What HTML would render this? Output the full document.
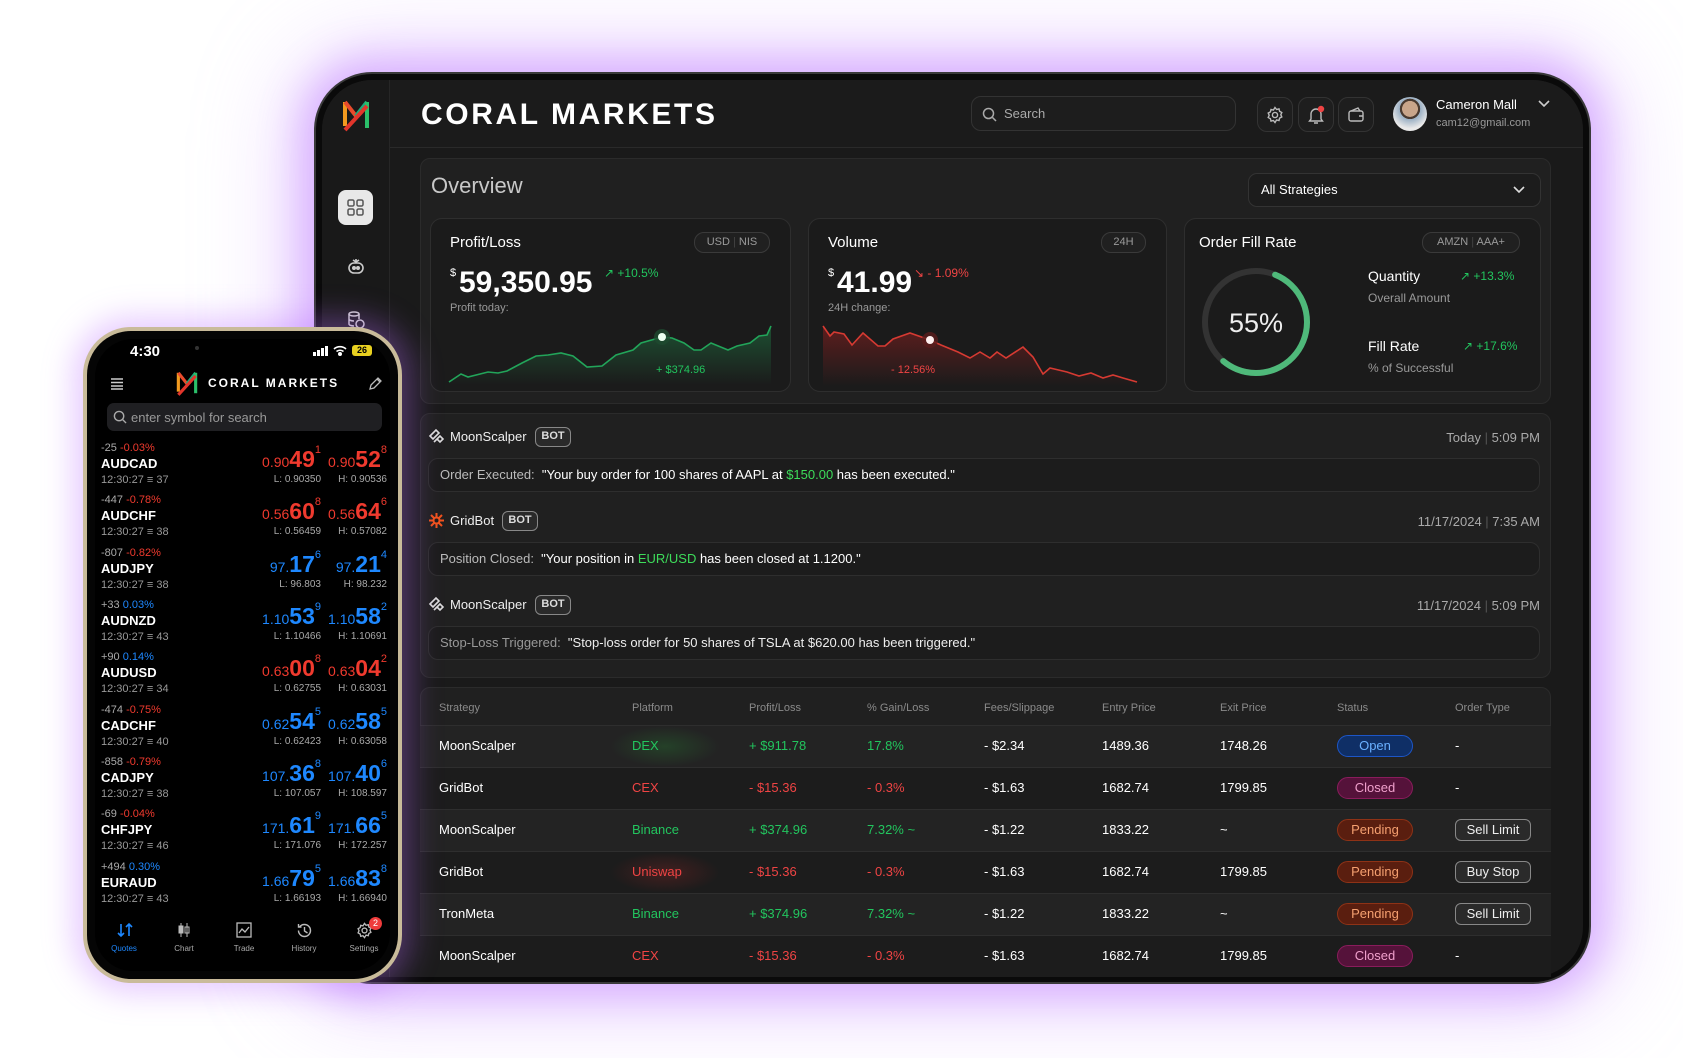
<!DOCTYPE html>
<html><head><meta charset="utf-8">
<style>
*{margin:0;padding:0;box-sizing:border-box}
body{width:1683px;height:1058px;background:#fff;position:relative;overflow:hidden;font-family:"Liberation Sans",sans-serif;color:#fff}
.a{position:absolute}
.tab{left:314px;top:72px;width:1277px;height:912px;border-radius:58px;background:#0a0a0a;border:2px solid #3a3a3a;box-shadow:0 0 40px 14px rgba(185,110,255,.45),0 0 90px 30px rgba(210,160,255,.35)}
.scr{left:322px;top:80px;width:1261px;height:897px;border-radius:50px;background:#1a1a1a;overflow:hidden}
.side{left:0;top:0;width:68px;height:100%;background:#191919;border-right:1px solid #262626}
.hdr{left:68px;top:0;right:0;height:68px;border-bottom:1px solid #2a2a2a;background:#1b1b1b}
.panel{background:#202020;border:1px solid #2b2b2b;border-radius:10px}
.card{background:#1b1b1b;border:1px solid #2e2e2e;border-radius:12px}
.pill{border:1px solid #3a3a3a;border-radius:10px;color:#9a9a9a;font-size:11px;text-align:center;background:#202020}
.ib{width:36px;height:35px;border:1px solid #333;border-radius:10px;background:#1e1e1e}
.g{color:#22c55e}.r{color:#ef4444}
.msg{left:428px;width:1112px;height:34px;border:1px solid #2e2e2e;border-radius:10px;background:#1c1c1c;font-size:13px;padding-left:11px;line-height:32px;color:#fff}
.bot{border:1.5px solid #888;border-radius:6px;font-size:11px;font-weight:bold;color:#ddd;width:36px;height:20px;line-height:17px;text-align:center;background:#2a2a2a}
.mh{font-size:13px;color:#eee}
.dt{font-size:13px;color:#aaa;text-align:right;left:1240px;width:300px}
.th{font-size:11px;color:#8a8a8a;top:702px}
.tr{left:420px;width:1131px;height:42px;border-top:1px solid #2e2e2e}
.td{font-size:13px;line-height:42px}
.st{width:76px;height:22px;border-radius:11px;font-size:13px;text-align:center;line-height:19px;border:1.5px solid}
.ot{width:76px;height:22px;border-radius:6px;font-size:13px;text-align:center;line-height:19px;border:1.5px solid #888;background:#2a2a2a;color:#eee}
.phone{left:83px;top:327px;width:319px;height:656px;border-radius:48px;background:#c9bb9a;box-shadow:0 0 30px 10px rgba(185,110,255,.35)}
.pin{left:87px;top:331px;width:311px;height:648px;border-radius:44px;background:#050505}
.row{left:101px;width:290px;height:52px}
.chg{font-size:11px;color:#aaa;top:2px;left:0}
.sym{font-size:13px;font-weight:bold;top:16px;left:0;color:#fff}
.tm{font-size:11px;color:#999;top:34px;left:0}
.pr{top:6px;text-align:right;font-size:14px;white-space:nowrap}
.pr b{font-size:23px;font-weight:bold}
.pr sup{font-size:11px;position:relative;top:-2px;vertical-align:top}
.lh{top:34px;font-size:10px;color:#aaa;text-align:right}
.B{color:#1e88ff}.R{color:#f03a2e}
</style></head><body>

<div class="a tab"></div>
<div class="a scr">
 <div class="a side">
  <svg class="a" style="left:20px;top:16px" width="28" height="38" viewBox="0 0 28 38"><path d="M3 6 L3 30" stroke="#f29a1f" stroke-width="4"/><path d="M3 6 L14 20" stroke="#e94b2c" stroke-width="4"/><path d="M14 20 L25 6" stroke="#1faa7a" stroke-width="4"/><path d="M25 6 L25 32" stroke="#2bbf6a" stroke-width="4"/><path d="M3 34 L25 10" stroke="#e2352b" stroke-width="4"/></svg>
  <div class="a" style="left:16px;top:110px;width:35px;height:35px;border-radius:8px;background:#e8e8e8"></div>
  <svg class="a" style="left:25px;top:119px" width="17" height="17" viewBox="0 0 17 17" fill="none" stroke="#555" stroke-width="1.5"><rect x="1" y="1" width="6" height="6" rx="1.5"/><rect x="10" y="1" width="6" height="6" rx="1.5"/><rect x="1" y="10" width="6" height="6" rx="1.5"/><rect x="10" y="10" width="6" height="6" rx="1.5"/></svg>
  <svg class="a" style="left:24px;top:176px" width="20" height="20" viewBox="0 0 20 20" fill="none" stroke="#ccc" stroke-width="1.6"><rect x="3" y="7" width="14" height="10" rx="5"/><circle cx="8" cy="12" r="1.2" fill="#ccc"/><circle cx="12" cy="12" r="1.2" fill="#ccc"/><path d="M10 7V3M7 4l3 2 3-2"/></svg>
  <svg class="a" style="left:24px;top:230px" width="20" height="20" viewBox="0 0 20 20" fill="none" stroke="#ccc" stroke-width="1.5"><ellipse cx="8" cy="4" rx="5" ry="2"/><path d="M3 4v10c0 1 2 2 5 2M13 4v5M3 9c0 1 2 2 5 2"/><circle cx="14" cy="14" r="4"/></svg>
 </div>
 <div class="a hdr">
  <div class="a" style="left:31px;top:18px;font-size:30px;font-weight:bold;letter-spacing:2.6px">CORAL MARKETS</div>
  <div class="a" style="left:581px;top:16px;width:265px;height:35px;border:1px solid #333;border-radius:10px;background:#1d1d1d"></div>
  <svg class="a" style="left:592px;top:27px" width="15" height="15" viewBox="0 0 15 15" fill="none" stroke="#aaa" stroke-width="1.5"><circle cx="6.5" cy="6.5" r="5"/><path d="M10.5 10.5l3.5 3.5"/></svg>
  <div class="a" style="left:614px;top:26px;font-size:13px;color:#aaa">Search</div>
  <div class="a ib" style="left:867px;top:17px"></div>
  <div class="a ib" style="left:908px;top:17px"></div>
  <div class="a ib" style="left:948px;top:17px"></div>
  <svg class="a" style="left:876px;top:26px" width="18" height="18" viewBox="0 0 18 18" fill="none" stroke="#bbb" stroke-width="1.4"><circle cx="9" cy="9" r="2.6"/><path d="M9 1.5l1.6 2 2.4-.6.6 2.4 2.2 1.2-1 2.2 1 2.2-2.2 1.2-.6 2.4-2.4-.6L9 16.5l-1.6-2-2.4.6-.6-2.4-2.2-1.2 1-2.2-1-2.2 2.2-1.2.6-2.4 2.4.6z"/></svg>
  <svg class="a" style="left:917px;top:25px" width="18" height="20" viewBox="0 0 18 20" fill="none" stroke="#bbb" stroke-width="1.4"><path d="M4 14V9a5 5 0 0110 0v5l1.5 2h-13zM7 18h4"/><circle cx="14" cy="4" r="3.2" fill="#ef4444" stroke="none"/></svg>
  <svg class="a" style="left:957px;top:27px" width="18" height="16" viewBox="0 0 18 16" fill="none" stroke="#bbb" stroke-width="1.4"><rect x="2" y="4" width="14" height="10" rx="2"/><path d="M4 4l7-3 2 3M12 9h4"/></svg>
  <div class="a" style="left:1003px;top:17px;width:34px;height:34px;border-radius:50%;background:radial-gradient(circle at 50% 35%,#c9a58a 0 28%,#4a3a30 29% 36%,#9bb0c4 37%,#e9e9e9 70%)"></div>
  <div class="a" style="left:1046px;top:17px;font-size:13px;color:#fff">Cameron Mall</div>
  <div class="a" style="left:1046px;top:37px;font-size:11px;color:#999">cam12@gmail.com</div>
  <svg class="a" style="left:1148px;top:20px" width="12" height="8" viewBox="0 0 12 8" fill="none" stroke="#ccc" stroke-width="1.6"><path d="M1 1l5 5 5-5"/></svg>
 </div>
</div>

<div class="a panel" style="left:420px;top:158px;width:1131px;height:246px"></div>
<div class="a" style="left:431px;top:173px;font-size:22px;color:#c8c8c8">Overview</div>
<div class="a" style="left:1248px;top:173px;width:293px;height:34px;border:1px solid #333;border-radius:9px;background:#1c1c1c"></div>
<div class="a" style="left:1261px;top:182px;font-size:13px">All Strategies</div>
<svg class="a" style="left:1513px;top:186px" width="12" height="8" viewBox="0 0 12 8" fill="none" stroke="#ddd" stroke-width="1.6"><path d="M1 1l5 5 5-5"/></svg>

<div class="a card" style="left:430px;top:218px;width:361px;height:174px"></div>
<div class="a card" style="left:808px;top:218px;width:359px;height:174px"></div>
<div class="a card" style="left:1184px;top:218px;width:357px;height:174px"></div>

<div class="a" style="left:450px;top:234px;font-size:15px">Profit/Loss</div>
<div class="a pill" style="left:694px;top:232px;width:76px;height:21px;line-height:19px">USD <span style="color:#444">|</span> NIS</div>
<div class="a" style="left:450px;top:267px;font-size:11px">$</div>
<div class="a" style="left:459px;top:266px;font-size:30px;font-weight:bold">59,350.95</div>
<div class="a g" style="left:604px;top:266px;font-size:12px">&#8599; +10.5%</div>
<div class="a" style="left:450px;top:302px;font-size:11px;color:#999">Profit today:</div>

<div class="a" style="left:828px;top:234px;font-size:15px">Volume</div>
<div class="a pill" style="left:1101px;top:232px;width:45px;height:21px;line-height:19px">24H</div>
<div class="a" style="left:828px;top:267px;font-size:11px">$</div>
<div class="a" style="left:837px;top:266px;font-size:30px;font-weight:bold">41.99</div>
<div class="a r" style="left:914px;top:266px;font-size:12px">&#8600; - 1.09%</div>
<div class="a" style="left:828px;top:302px;font-size:11px;color:#999">24H change:</div>

<svg class="a" style="left:0;top:0" width="1683" height="1058">
 <defs>
  <linearGradient id="gg" x1="0" y1="0" x2="0" y2="1"><stop offset="0" stop-color="#1f7a44" stop-opacity=".55"/><stop offset="1" stop-color="#1f7a44" stop-opacity="0"/></linearGradient>
  <linearGradient id="rg" x1="0" y1="0" x2="0" y2="1"><stop offset="0" stop-color="#8a1f1f" stop-opacity=".6"/><stop offset="1" stop-color="#8a1f1f" stop-opacity="0"/></linearGradient>
 </defs>
 <polygon fill="url(#gg)" points="449,382 461,374 468,377 488,372 498,373 507,371 522,363 536,356 548,355 561,353 573,356 587,367 602,366 616,355 633,350 641,343 662,337 672,338 684,343 694,350 701,350 711,343 728,350 737,346 750,343 759,336 767,335 771,326 771,385 449,385"/>
 <polyline fill="none" stroke="#22a55a" stroke-width="1.6" points="449,382 461,374 468,377 488,372 498,373 507,371 522,363 536,356 548,355 561,353 573,356 587,367 602,366 616,355 633,350 641,343 662,337 672,338 684,343 694,350 701,350 711,343 728,350 737,346 750,343 759,336 767,335 771,326"/>
 <circle cx="662" cy="337" r="8" fill="#1e4a30" opacity=".8"/><circle cx="662" cy="337" r="4" fill="#eafff0"/>
 <polygon fill="url(#rg)" points="823,326 830,336 834,332 844,334 852,345 863,333 878,346 885,346 893,339 910,333 930,340 941,345 958,352 970,358 980,352 990,358 997,352 1006,358 1023,347 1033,357 1043,374 1050,368 1067,372 1079,376 1091,373 1103,378 1113,375 1123,378 1137,382 1137,386 823,386"/>
 <polyline fill="none" stroke="#d63a32" stroke-width="1.6" points="823,326 830,336 834,332 844,334 852,345 863,333 878,346 885,346 893,339 910,333 930,340 941,345 958,352 970,358 980,352 990,358 997,352 1006,358 1023,347 1033,357 1043,374 1050,368 1067,372 1079,376 1091,373 1103,378 1113,375 1123,378 1137,382"/>
 <circle cx="930" cy="340" r="8" fill="#5a1d1d" opacity=".8"/><circle cx="930" cy="340" r="4" fill="#fff0f0"/>
 <circle cx="1256" cy="322" r="51" fill="none" stroke="#333" stroke-width="6"/>
 <circle cx="1256" cy="322" r="51" fill="none" stroke="#4fb97a" stroke-width="6" stroke-linecap="round" stroke-dasharray="176 320" transform="rotate(-68 1256 322)"/>
</svg>
<div class="a g" style="left:656px;top:364px;font-size:11px">+ $374.96</div>
<div class="a r" style="left:891px;top:364px;font-size:11px">- 12.56%</div>

<div class="a" style="left:1199px;top:234px;font-size:15px">Order Fill Rate</div>
<div class="a pill" style="left:1422px;top:232px;width:98px;height:21px;line-height:19px">AMZN <span style="color:#444">|</span> AAA+</div>
<div class="a" style="left:1204px;top:308px;width:104px;text-align:center;font-size:27px;color:#eee">55%</div>
<div class="a" style="left:1368px;top:268px;font-size:14px">Quantity</div>
<div class="a g" style="left:1460px;top:269px;font-size:12px">&#8599; +13.3%</div>
<div class="a" style="left:1368px;top:291px;font-size:12px;color:#999">Overall Amount</div>
<div class="a" style="left:1368px;top:338px;font-size:14px">Fill Rate</div>
<div class="a g" style="left:1463px;top:339px;font-size:12px">&#8599; +17.6%</div>
<div class="a" style="left:1368px;top:361px;font-size:12px;color:#999">% of Successful</div>

<div class="a panel" style="left:420px;top:413px;width:1131px;height:265px"></div>
<svg class="a" style="left:428px;top:428px" width="17" height="17" viewBox="0 0 17 17" fill="none" stroke="#ddd" stroke-width="1.6"><path d="M2 8l6-6 3 3-6 6zM6 14l6-6 3 3-3 3-3-3"/></svg>
<div class="a mh" style="left:450px;top:429px">MoonScalper</div>
<div class="a bot" style="left:535px;top:427px">BOT</div>
<div class="a dt" style="top:430px">Today <span style="color:#555">|</span> 5:09 PM</div>
<div class="a msg" style="top:458px"><span style="color:#bbb">Order Executed:</span>&nbsp; "Your buy order for 100 shares of AAPL at <span style="color:#3ddc5a">$150.00</span> has been executed."</div>

<svg class="a" style="left:428px;top:512px" width="17" height="17" viewBox="0 0 17 17" stroke="#f0521d" stroke-width="2"><path d="M8.5 1v15M1 8.5h15M3 3l11 11M14 3L3 14"/><circle cx="8.5" cy="8.5" r="3" fill="#1c1c1c"/></svg>
<div class="a mh" style="left:450px;top:513px">GridBot</div>
<div class="a bot" style="left:502px;top:511px">BOT</div>
<div class="a dt" style="top:514px">11/17/2024 <span style="color:#555">|</span> 7:35 AM</div>
<div class="a msg" style="top:542px"><span style="color:#bbb">Position Closed:</span>&nbsp; "Your position in <span style="color:#3ddc5a">EUR/USD</span> has been closed at 1.1200."</div>

<svg class="a" style="left:428px;top:596px" width="17" height="17" viewBox="0 0 17 17" fill="none" stroke="#ddd" stroke-width="1.6"><path d="M2 8l6-6 3 3-6 6zM6 14l6-6 3 3-3 3-3-3"/></svg>
<div class="a mh" style="left:450px;top:597px">MoonScalper</div>
<div class="a bot" style="left:535px;top:595px">BOT</div>
<div class="a dt" style="top:598px">11/17/2024 <span style="color:#555">|</span> 5:09 PM</div>
<div class="a msg" style="top:626px;color:#eee"><span style="color:#999">Stop-Loss Triggered:</span>&nbsp; "Stop-loss order for 50 shares of TSLA at $620.00 has been triggered."</div>

<div class="a" style="left:420px;top:687px;width:1131px;height:290px;background:#202020;border:1px solid #2b2b2b;border-radius:10px 10px 0 0"></div>
<div class="a th" style="left:439px">Strategy</div><div class="a th" style="left:632px">Platform</div><div class="a th" style="left:749px">Profit/Loss</div><div class="a th" style="left:867px">% Gain/Loss</div><div class="a th" style="left:984px">Fees/Slippage</div><div class="a th" style="left:1102px">Entry Price</div><div class="a th" style="left:1220px">Exit Price</div><div class="a th" style="left:1337px">Status</div><div class="a th" style="left:1455px">Order Type</div>

<div class="a tr" style="top:725px;background:#232323"></div>
<div class="a tr" style="top:767px;background:#1c1c1c"></div>
<div class="a tr" style="top:809px;background:#232323"></div>
<div class="a tr" style="top:851px;background:#1c1c1c"></div>
<div class="a tr" style="top:893px;background:#232323"></div>
<div class="a tr" style="top:935px;background:#1c1c1c;height:42px"></div>
<div class="a" style="left:610px;top:726px;width:110px;height:41px;background:radial-gradient(ellipse at center,rgba(40,120,50,.35),transparent 70%)"></div>
<div class="a" style="left:610px;top:852px;width:110px;height:41px;background:radial-gradient(ellipse at center,rgba(140,35,35,.35),transparent 70%)"></div>

<div class="a td" style="left:439px;top:725px">MoonScalper</div><div class="a td g" style="left:632px;top:725px">DEX</div><div class="a td g" style="left:749px;top:725px">+ $911.78</div><div class="a td g" style="left:867px;top:725px">17.8%</div><div class="a td" style="left:984px;top:725px">- $2.34</div><div class="a td" style="left:1102px;top:725px">1489.36</div><div class="a td" style="left:1220px;top:725px">1748.26</div>
<div class="a st" style="left:1337px;top:735px;background:#0f2f66;border-color:#1d56c8;color:#6ab0ff">Open</div><div class="a td" style="left:1455px;top:725px">-</div>

<div class="a td" style="left:439px;top:767px">GridBot</div><div class="a td r" style="left:632px;top:767px">CEX</div><div class="a td r" style="left:749px;top:767px">- $15.36</div><div class="a td r" style="left:867px;top:767px">- 0.3%</div><div class="a td" style="left:984px;top:767px">- $1.63</div><div class="a td" style="left:1102px;top:767px">1682.74</div><div class="a td" style="left:1220px;top:767px">1799.85</div>
<div class="a st" style="left:1337px;top:777px;background:#55123a;border-color:#8a1c5c;color:#f0a0cc">Closed</div><div class="a td" style="left:1455px;top:767px">-</div>

<div class="a td" style="left:439px;top:809px">MoonScalper</div><div class="a td g" style="left:632px;top:809px">Binance</div><div class="a td g" style="left:749px;top:809px">+ $374.96</div><div class="a td g" style="left:867px;top:809px">7.32% ~</div><div class="a td" style="left:984px;top:809px">- $1.22</div><div class="a td" style="left:1102px;top:809px">1833.22</div><div class="a td" style="left:1220px;top:809px">~</div>
<div class="a st" style="left:1337px;top:819px;background:#5a1e0f;border-color:#8e3216;color:#f5a070">Pending</div><div class="a ot" style="left:1455px;top:819px">Sell Limit</div>

<div class="a td" style="left:439px;top:851px">GridBot</div><div class="a td r" style="left:632px;top:851px">Uniswap</div><div class="a td r" style="left:749px;top:851px">- $15.36</div><div class="a td r" style="left:867px;top:851px">- 0.3%</div><div class="a td" style="left:984px;top:851px">- $1.63</div><div class="a td" style="left:1102px;top:851px">1682.74</div><div class="a td" style="left:1220px;top:851px">1799.85</div>
<div class="a st" style="left:1337px;top:861px;background:#5a1e0f;border-color:#8e3216;color:#f5a070">Pending</div><div class="a ot" style="left:1455px;top:861px">Buy Stop</div>

<div class="a td" style="left:439px;top:893px">TronMeta</div><div class="a td g" style="left:632px;top:893px">Binance</div><div class="a td g" style="left:749px;top:893px">+ $374.96</div><div class="a td g" style="left:867px;top:893px">7.32% ~</div><div class="a td" style="left:984px;top:893px">- $1.22</div><div class="a td" style="left:1102px;top:893px">1833.22</div><div class="a td" style="left:1220px;top:893px">~</div>
<div class="a st" style="left:1337px;top:903px;background:#5a1e0f;border-color:#8e3216;color:#f5a070">Pending</div><div class="a ot" style="left:1455px;top:903px">Sell Limit</div>

<div class="a td" style="left:439px;top:935px">MoonScalper</div><div class="a td r" style="left:632px;top:935px">CEX</div><div class="a td r" style="left:749px;top:935px">- $15.36</div><div class="a td r" style="left:867px;top:935px">- 0.3%</div><div class="a td" style="left:984px;top:935px">- $1.63</div><div class="a td" style="left:1102px;top:935px">1682.74</div><div class="a td" style="left:1220px;top:935px">1799.85</div>
<div class="a st" style="left:1337px;top:945px;background:#55123a;border-color:#8a1c5c;color:#f0a0cc">Closed</div><div class="a td" style="left:1455px;top:935px">-</div>

<div class="a phone"></div>
<div class="a pin"></div>
<div class="a" style="left:95px;top:339px;width:295px;height:632px;border-radius:38px;background:#000;overflow:hidden"></div>
<div class="a" style="left:130px;top:343px;font-size:15px;font-weight:bold">4:30</div>
<div class="a" style="left:195px;top:346px;width:4px;height:4px;border-radius:50%;background:#333"></div>
<svg class="a" style="left:313px;top:346px" width="16" height="10" viewBox="0 0 16 10" fill="#fff"><rect x="0" y="6" width="3" height="4"/><rect x="4" y="4" width="3" height="6"/><rect x="8" y="2" width="3" height="8"/><rect x="12" y="0" width="3" height="10"/></svg>
<svg class="a" style="left:333px;top:345px" width="14" height="11" viewBox="0 0 14 11" fill="none" stroke="#fff" stroke-width="1.6"><path d="M1 4a9 9 0 0112 0M3.5 6.5a5.5 5.5 0 017 0"/><circle cx="7" cy="9" r="1.2" fill="#fff"/></svg>
<div class="a" style="left:352px;top:345px;width:20px;height:11px;border-radius:3px;background:#e8d020;color:#000;font-size:9px;font-weight:bold;text-align:center;line-height:11px">26</div>

<svg class="a" style="left:110px;top:378px" width="14" height="12" viewBox="0 0 14 12" stroke="#ccc" stroke-width="1.4"><path d="M1 1h12M1 4.5h12M1 8h12M1 11h12"/></svg>
<svg class="a" style="left:176px;top:368px" width="22" height="30" viewBox="0 0 28 38"><path d="M3 6 L3 30" stroke="#f29a1f" stroke-width="4"/><path d="M3 6 L14 20" stroke="#e94b2c" stroke-width="4"/><path d="M14 20 L25 6" stroke="#1faa7a" stroke-width="4"/><path d="M25 6 L25 32" stroke="#2bbf6a" stroke-width="4"/><path d="M3 34 L25 10" stroke="#e2352b" stroke-width="4"/></svg>
<div class="a" style="left:208px;top:376px;font-size:12px;font-weight:bold;letter-spacing:2px">CORAL MARKETS</div>
<svg class="a" style="left:368px;top:377px" width="14" height="14" viewBox="0 0 14 14" fill="none" stroke="#bbb" stroke-width="1.3"><path d="M2 12l1-4 7-7 3 3-7 7zM9 2l3 3"/></svg>
<div class="a" style="left:107px;top:403px;width:275px;height:28px;border-radius:7px;background:#1f1f22"></div>
<svg class="a" style="left:113px;top:410px" width="14" height="14" viewBox="0 0 15 15" fill="none" stroke="#aaa" stroke-width="1.5"><circle cx="6.5" cy="6.5" r="5"/><path d="M10.5 10.5l3.5 3.5"/></svg>
<div class="a" style="left:131px;top:410px;font-size:13px;color:#999">enter symbol for search</div>

<div class="a row" style="top:440px"><div class="a chg">-25 <span class="R">-0.03%</span></div><div class="a sym">AUDCAD</div><div class="a tm">12:30:27 &#8801; 37</div>
<div class="a pr R" style="right:70px">0.90<b>49</b><sup>1</sup></div><div class="a pr R" style="right:4px">0.90<b>52</b><sup>8</sup></div><div class="a lh" style="right:70px">L: 0.90350</div><div class="a lh" style="right:4px">H: 0.90536</div></div>
<div class="a row" style="top:492px"><div class="a chg">-447 <span class="R">-0.78%</span></div><div class="a sym">AUDCHF</div><div class="a tm">12:30:27 &#8801; 38</div>
<div class="a pr R" style="right:70px">0.56<b>60</b><sup>8</sup></div><div class="a pr R" style="right:4px">0.56<b>64</b><sup>6</sup></div><div class="a lh" style="right:70px">L: 0.56459</div><div class="a lh" style="right:4px">H: 0.57082</div></div>
<div class="a row" style="top:545px"><div class="a chg">-807 <span class="R">-0.82%</span></div><div class="a sym">AUDJPY</div><div class="a tm">12:30:27 &#8801; 38</div>
<div class="a pr B" style="right:70px">97.<b>17</b><sup>6</sup></div><div class="a pr B" style="right:4px">97.<b>21</b><sup>4</sup></div><div class="a lh" style="right:70px">L: 96.803</div><div class="a lh" style="right:4px">H: 98.232</div></div>
<div class="a row" style="top:597px"><div class="a chg">+33 <span class="B">0.03%</span></div><div class="a sym">AUDNZD</div><div class="a tm">12:30:27 &#8801; 43</div>
<div class="a pr B" style="right:70px">1.10<b>53</b><sup>9</sup></div><div class="a pr B" style="right:4px">1.10<b>58</b><sup>2</sup></div><div class="a lh" style="right:70px">L: 1.10466</div><div class="a lh" style="right:4px">H: 1.10691</div></div>
<div class="a row" style="top:649px"><div class="a chg">+90 <span class="B">0.14%</span></div><div class="a sym">AUDUSD</div><div class="a tm">12:30:27 &#8801; 34</div>
<div class="a pr R" style="right:70px">0.63<b>00</b><sup>8</sup></div><div class="a pr R" style="right:4px">0.63<b>04</b><sup>2</sup></div><div class="a lh" style="right:70px">L: 0.62755</div><div class="a lh" style="right:4px">H: 0.63031</div></div>
<div class="a row" style="top:702px"><div class="a chg">-474 <span class="R">-0.75%</span></div><div class="a sym">CADCHF</div><div class="a tm">12:30:27 &#8801; 40</div>
<div class="a pr B" style="right:70px">0.62<b>54</b><sup>5</sup></div><div class="a pr B" style="right:4px">0.62<b>58</b><sup>5</sup></div><div class="a lh" style="right:70px">L: 0.62423</div><div class="a lh" style="right:4px">H: 0.63058</div></div>
<div class="a row" style="top:754px"><div class="a chg">-858 <span class="R">-0.79%</span></div><div class="a sym">CADJPY</div><div class="a tm">12:30:27 &#8801; 38</div>
<div class="a pr B" style="right:70px">107.<b>36</b><sup>8</sup></div><div class="a pr B" style="right:4px">107.<b>40</b><sup>6</sup></div><div class="a lh" style="right:70px">L: 107.057</div><div class="a lh" style="right:4px">H: 108.597</div></div>
<div class="a row" style="top:806px"><div class="a chg">-69 <span class="R">-0.04%</span></div><div class="a sym">CHFJPY</div><div class="a tm">12:30:27 &#8801; 46</div>
<div class="a pr B" style="right:70px">171.<b>61</b><sup>9</sup></div><div class="a pr B" style="right:4px">171.<b>66</b><sup>5</sup></div><div class="a lh" style="right:70px">L: 171.076</div><div class="a lh" style="right:4px">H: 172.257</div></div>
<div class="a row" style="top:859px"><div class="a chg">+494 <span class="B">0.30%</span></div><div class="a sym">EURAUD</div><div class="a tm">12:30:27 &#8801; 43</div>
<div class="a pr B" style="right:70px">1.66<b>79</b><sup>5</sup></div><div class="a pr B" style="right:4px">1.66<b>83</b><sup>8</sup></div><div class="a lh" style="right:70px">L: 1.66193</div><div class="a lh" style="right:4px">H: 1.66940</div></div>

<div class="a" style="left:95px;top:916px;width:295px;height:55px;background:#000;border-radius:0 0 38px 38px"></div>
<svg class="a" style="left:116px;top:922px" width="18" height="16" viewBox="0 0 18 16" fill="none" stroke="#1e88ff" stroke-width="1.6"><path d="M5 2v12M2 11l3 3 3-3M13 14V2M10 5l3-3 3 3"/></svg>
<svg class="a" style="left:177px;top:922px" width="14" height="16" viewBox="0 0 14 16" fill="#bbb" stroke="#bbb"><path d="M4 1v14M10 1v14" stroke-width="1"/><rect x="2" y="4" width="4" height="7"/><rect x="8" y="5" width="4" height="6" fill="none"/></svg>
<svg class="a" style="left:236px;top:922px" width="16" height="16" viewBox="0 0 16 16" fill="none" stroke="#bbb" stroke-width="1.3"><rect x="1" y="1" width="14" height="14"/><path d="M3 11l3-4 3 3 4-5"/></svg>
<svg class="a" style="left:296px;top:922px" width="17" height="17" viewBox="0 0 17 17" fill="none" stroke="#bbb" stroke-width="1.4"><path d="M2.5 8.5a6 6 0 106-6 6 6 0 00-5 2.5M2.5 2v3h3M8.5 5v4l3 2"/></svg>
<svg class="a" style="left:356px;top:922px" width="17" height="17" viewBox="0 0 18 18" fill="none" stroke="#bbb" stroke-width="1.4"><circle cx="9" cy="9" r="2.6"/><path d="M9 1.5l1.6 2 2.4-.6.6 2.4 2.2 1.2-1 2.2 1 2.2-2.2 1.2-.6 2.4-2.4-.6L9 16.5l-1.6-2-2.4.6-.6-2.4-2.2-1.2 1-2.2-1-2.2 2.2-1.2.6-2.4 2.4.6z"/></svg>
<div class="a" style="left:369px;top:917px;width:13px;height:13px;border-radius:50%;background:#ef3b3b;font-size:9px;text-align:center;line-height:13px">2</div>
<div class="a" style="left:104px;top:944px;width:40px;text-align:center;font-size:8px;color:#1e88ff">Quotes</div>
<div class="a" style="left:164px;top:944px;width:40px;text-align:center;font-size:8px;color:#aaa">Chart</div>
<div class="a" style="left:224px;top:944px;width:40px;text-align:center;font-size:8px;color:#aaa">Trade</div>
<div class="a" style="left:284px;top:944px;width:40px;text-align:center;font-size:8px;color:#aaa">History</div>
<div class="a" style="left:344px;top:944px;width:40px;text-align:center;font-size:8px;color:#aaa">Settings</div>
</body></html>
